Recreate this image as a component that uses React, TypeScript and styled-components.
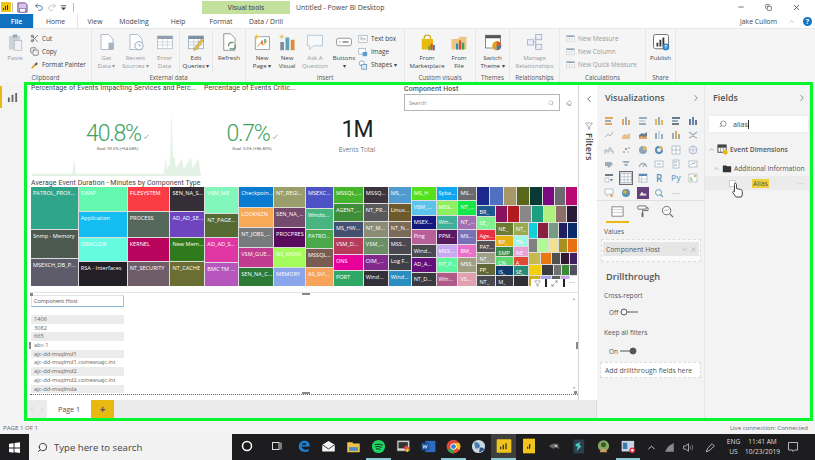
import React from 'react';
import styled, { createGlobalStyle } from 'styled-components';
import { ChevronDown, ChevronLeft, ChevronRight, ChevronUp, Eraser, Search, X, Filter, Maximize2, Minus, Copy, Scissors, Undo2, Redo2 } from 'lucide-react';

const Global = createGlobalStyle`
  html, body { margin: 0; padding: 0; width: 815px; height: 460px; overflow: hidden; background: #fff; }
  #root { width: 815px; height: 460px; }
  * { box-sizing: border-box; }
`;

const Page = styled.div`
  width: 815px; height: 460px; display: flex; flex-direction: column;
  font-family: "Open Sans", "Liberation Sans", sans-serif; color: #444; background: #fff;
`;

/* ---------- title bar ---------- */
const TitleBar = styled.div`display: flex; height: 14px; background: #fff;`;
const Qat = styled.div`width: 202px; display: flex; align-items: center; padding-left: 1px;`;
const QatItem = styled.span<{ $w: number }>`width: ${p => p.$w}px; display: flex; justify-content: center; align-items: center;`;
const QatSep = styled.span`width: 1px; height: 9px; background: #bbb;`;
const ToolsTab = styled.div`width: 88px; height: 13px; margin-top: 1px; background: #c3e09d; color: #556; font-size: 6.6px; font-weight: 600; display: flex; align-items: center; justify-content: center;`;
const DocTitle = styled.div`padding: 2px 0 0 6px; font-size: 6.9px; color: #444; line-height: 12px; white-space: nowrap;`;
const WinControls = styled.div`margin-left: auto; display: flex; padding-right: 5px; align-items: center; color: #333;`;
const WinBtn = styled.span`width: 27.5px; display: flex; justify-content: center;`;

/* ---------- tabs ---------- */
const TabRow = styled.div`display: flex; height: 14px; background: #fff; align-items: stretch;`;
const FileTab = styled.div`width: 33px; background: #0f71c0; color: #fff; font-size: 7px; font-weight: 600; display: flex; align-items: center; justify-content: center;`;
const Tab = styled.div<{ $w: number; $active?: boolean }>`
  width: ${p => p.$w}px; font-size: 6.8px; color: #444; display: flex; align-items: center; justify-content: center;
  background: #fff; ${p => p.$active ? 'border-left: 1px solid #e4e4e4; border-right: 1px solid #e4e4e4;' : ''}
`;
const Account = styled.div`margin-left: auto; display: flex; align-items: center; font-size: 6.8px; color: #444; padding-right: 3px;`;
const HelpDot = styled.span`width: 9px; height: 9px; border-radius: 50%; background: #1173c4; color: #fff; font-size: 7px; font-weight: 700; display: flex; align-items: center; justify-content: center; margin-left: 8px;`;
const Caret = styled.span`margin-left: 11px; color: #999; display: flex;`;

/* ---------- ribbon ---------- */
const Ribbon = styled.div`display: flex; height: 54px; background: #f5f5f5; border-top: 1px solid #e8e8e8;`;
const Group = styled.div<{ $w: number }>`
  width: ${p => p.$w}px; display: flex; flex-direction: column; border-right: 1px solid #e6e6e6; flex: none;
`;
const GroupBody = styled.div<{ $pad?: number }>`height: 44px; display: flex; padding-left: ${p => p.$pad ?? 0}px; padding-top: 2px;`;
const GroupLabel = styled.div`height: 9px; font-size: 6.2px; line-height: 9px; text-align: center; color: #555; white-space: nowrap;`;
const RBtn = styled.div<{ $w: number; $off?: boolean; $rule?: boolean }>`
  width: ${p => p.$w}px; flex: none; display: flex; flex-direction: column; align-items: center; font-size: 6.1px; line-height: 8px; text-align: center;
  color: ${p => p.$off ? '#9a9a9a' : '#444'}; white-space: nowrap; ${p => p.$rule ? 'border-left: 1px solid #e6e6e6;' : ''}
`;
const RIcon = styled.div`height: 22px; display: flex; align-items: center; justify-content: center; margin-bottom: 1px;`;
const SmallCol = styled.div<{ $off?: boolean }>`display: flex; flex-direction: column; padding-top: 1px; color: ${p => p.$off ? '#9a9a9a' : '#444'};`;
const SmallRow = styled.div`height: 13px; display: flex; align-items: center; gap: 3px; font-size: 6.3px; white-space: nowrap;`;

/* ---------- body ---------- */
const Body = styled.div`height: 339px; display: flex; background: #f3f3f3;`;
const Rail = styled.div`width: 24px; flex: none; padding-top: 4px; display: flex; justify-content: center;`;
const RailItem = styled.div`width: 24px; height: 22px; border-left: 2px solid #e8b90f; display: flex; align-items: center; justify-content: center; padding-right: 2px;`;
const Frame = styled.div`width: 789px; flex: none; border: 3px solid #06f52f; display: flex;`;
const Report = styled.div`width: 570px; flex: none; display: flex; flex-direction: column;`;
const CanvasRow = styled.div`height: 315px; display: flex; background: #fff;`;
const Canvas = styled.div`width: 551px; flex: none; padding: 0 0 0 4px; display: flex; flex-direction: column; position: relative;`;
const KpiRow = styled.div`height: 94px; display: grid; grid-template-columns: 173px 96px 104px 173px;`;
const Card = styled.div<{ $shift?: number }>`position: relative; display: flex; flex-direction: column; min-width: 0; padding-left: ${p => p.$shift ?? 0}px;`;
const CardTitle = styled.div`font-family: Roboto, sans-serif; font-size: 6.95px; letter-spacing: .1px; line-height: 9px; height: 9px; margin-top: -1px; color: #444; white-space: nowrap;`;
const CardBody = styled.div`flex: 1; display: flex; flex-direction: column; align-items: center; justify-content: center; position: relative;`;
const Spark = styled.svg`position: absolute; left: 1px; top: 15px; width: 169px; height: 68px;`;
const KpiValue = styled.div`font-family: Roboto, sans-serif; font-weight: 300; color: #3fa35f; font-size: 23px; letter-spacing: -1.2px; line-height: 25px; display: flex; align-items: flex-end; padding-top: 1px; position: relative;`;
const Tick = styled.span`margin: 0 0 6px 2px; display: flex;`;
const KpiGoal = styled.div`font-family: Roboto, sans-serif; font-size: 4.2px; color: #666; line-height: 6px; margin-top: 0; position: relative;`;
const BigNum = styled.div`font-family: Roboto, sans-serif; font-size: 23px; color: #222; line-height: 26px; letter-spacing: -1px;`;
const BigLabel = styled.div`font-family: Roboto, sans-serif; font-weight: 300; font-size: 6.8px; color: #555; line-height: 11px; margin-top: 2px;`;
const SlicerTitle = styled.div`font-family: Roboto, sans-serif; font-size: 7px; font-weight: 500; line-height: 9px; color: #555; letter-spacing: .1px;`;
const SlicerRow = styled.div`display: flex; align-items: center;`;
const SlicerBox = styled.div`width: 156px; height: 17px; border: 1px solid #b5b5b5; background: #fff; display: flex; align-items: center; justify-content: space-between; padding: 0 5px 0 4px; font-size: 5.5px; color: #888;`;
const Clear = styled.span`margin-left: 6px; color: #777; display: flex;`;
const TreeTitle = styled.div`font-family: Roboto, sans-serif; font-size: 6.95px; letter-spacing: .1px; height: 8px; line-height: 8px; color: #444; white-space: nowrap;`;
const TreeWrap = styled.div`position: relative; height: 99px; width: 546px;`;
const TreeBox = styled.div<{ $d: 'row' | 'column'; $w: number }>`
  flex: ${p => p.$w} 1 0; display: flex; flex-direction: ${p => p.$d}; gap: 1px; min-width: 0; min-height: 0; background: #ddd;
`;
const TreeRoot = styled(TreeBox)`height: 100%;`;
const Cell = styled.div<{ $bg: string; $w: number }>`
  flex: ${p => p.$w} 1 0; background: ${p => p.$bg}; color: #fff; font-size: 5.6px; line-height: 8px; padding: 2px 0 0 2px; overflow: hidden; white-space: nowrap; min-width: 0; min-height: 0;
`;
const VisualHeader = styled.div`position: absolute; right: 0; bottom: -1px; width: 46px; height: 8px; background: #fff; display: flex; align-items: center; justify-content: space-between; padding: 0 1px 0 3px; color: #777;`;
const HeadBar = styled.span`width: 2px; height: 8px; background: #222;`;
const HeadDots = styled.span`font-size: 7px; line-height: 4px; letter-spacing: .5px; color: #555;`;
const TableVisual = styled.div`margin-top: 6px; height: 103px; margin-left: -1px; width: 548px; position: relative; border-top: 1px solid #e4e4e4; border-bottom: 1px dotted #666; padding: 2px 0 0 1px;`;
const Handle = styled.span<{ $x: number; $y: number; $h?: number; $w?: number }>`position: absolute; left: ${p => p.$x}px; top: ${p => p.$y}px; width: ${p => p.$w ?? 2}px; height: ${p => p.$h ?? 2}px; background: #888;`;
const ColHead = styled.div`width: 93px; height: 12px; border: 1px solid #e2e2e2; border-bottom: 1px solid #88b6d6; border-right-color: #9fc4dc; font-size: 5.5px; line-height: 10px; padding-left: 2px; color: #555;`;
const Rows = styled.div`margin-top: 8px; width: 93px;`;
const TblRow = styled.div<{ $odd: boolean }>`height: 8.7px; line-height: 8.7px; font-size: 5.7px; padding-left: 3px; color: #666; background: ${p => p.$odd ? '#ececec' : '#fff'}; white-space: nowrap;`;
const ScrollTrack = styled.div`position: absolute; right: 2px; top: 3px; bottom: 4px; width: 5px; display: flex; flex-direction: column; align-items: center; justify-content: space-between; color: #999; font-size: 4px;`;

const FilterPane = styled.div`width: 19px; flex: none; border-left: 1px solid #d5d5d5; display: flex; flex-direction: column; align-items: center; padding: 9px 0 0 2px; color: #555;`;
const FilterIcon = styled.span`margin-top: 18px; display: flex; color: #888;`;
const FilterLabel = styled.div`writing-mode: vertical-rl; font-size: 9.2px; font-weight: 600; color: #444; margin-top: 3px; line-height: 11px;`;
const PageTabs = styled.div`height: 18px; background: #ebebeb; display: flex; align-items: stretch; border-right: 1px solid #ddd;`;
const PageNav = styled.div`width: 20px; display: flex; align-items: center; justify-content: center; gap: 4px; color: #bbb;`;
const PageTab = styled.div`width: 44px; background: #fff; font-size: 7.2px; color: #555; display: flex; align-items: center; justify-content: center;`;
const AddTab = styled.div`width: 23px; background: #e8b90f; color: #555; font-weight: 700; font-size: 10px; display: flex; align-items: center; justify-content: center;`;

/* ---------- right panes ---------- */
const Pane = styled.div<{ $w: number }>`width: ${p => p.$w}px; flex: none; background: #f3f3f3; border-right: 1px solid #e6e6e6; display: flex; flex-direction: column; position: relative;`;
const PaneHead = styled.div<{ $right: number }>`height: 24px; display: flex; align-items: center; justify-content: space-between; padding: 1px ${p => p.$right}px 0 8px; font-size: 9px; font-weight: 600; color: #555; flex: none;`;
const VizGrid = styled.div`display: grid; grid-template-columns: repeat(6, 14.5px); grid-auto-rows: 14.3px; column-gap: 2.2px; padding: 5px 0 0 5px; height: 92px; border-bottom: 1px solid #e0e0e0; flex: none;`;
const VizCell = styled.div<{ $sel?: boolean }>`display: flex; align-items: center; justify-content: center; opacity: .85; ${p => p.$sel ? 'outline: 1px solid #555; outline-offset: -1px;' : ''}`;
const VizTabs = styled.div`display: flex; height: 22px; padding-left: 9px; gap: 1px; flex: none;`;
const VizTab = styled.div<{ $on?: boolean }>`width: 23px; display: flex; align-items: center; justify-content: center; margin-right: 1px; border-bottom: 2px solid ${p => p.$on ? '#e8b90f' : 'transparent'};`;
const Caption = styled.div<{ $top: number }>`font-size: 6.6px; line-height: 9px; color: #555; padding-left: 7px; margin-top: ${p => p.$top}px;`;
const Well = styled.div`margin: 3px 3px 0 4px; height: 23px; border: 1px dashed #ddd; background: #fafafa; padding: 2px 1px;`;
const Pill = styled.div`height: 14px; background: #e6e6e6; display: flex; align-items: center; justify-content: space-between; font-size: 6.8px; padding: 0 2px 0 3px; color: #555;`;
const PillIcons = styled.span`display: flex; gap: 2px; color: #999;`;
const Section = styled.div`font-size: 9.2px; font-weight: 600; color: #555; padding-left: 9px; margin-top: 8px; line-height: 14px;`;
const ToggleRow = styled.div<{ $top: number }>`display: flex; align-items: center; height: 10px; padding-left: 12px; font-size: 6.4px; color: #555; margin-top: ${p => p.$top}px; gap: 2px;`;
const Drop = styled.div`margin: 6px 3px 0 3px; height: 16px; border: 1px dashed #ddd; background: #fff; font-size: 6.8px; display: flex; align-items: center; padding-left: 4px; color: #555; white-space: nowrap;`;
const FieldSearch = styled.div`margin: 6px 0 0 3px; height: 18px; background: #fff; border: 1px solid #eee; display: flex; align-items: center; gap: 6px; padding-left: 10px; font-size: 7.2px; color: #444; flex: none;`;
const TextCaret = styled.span`width: 1px; height: 9px; background: #333; margin-left: -6px;`;
const TreeLine = styled.div<{ $pad: number; $top: number; $bold?: boolean }>`display: flex; align-items: center; gap: 2px; height: 12px; padding-left: ${p => p.$pad}px; margin-top: ${p => p.$top}px; font-size: 6.7px; font-weight: ${p => p.$bold ? 600 : 400}; color: #555; white-space: nowrap;`;
const AliasRow = styled.div`height: 14px; margin-top: 2px; background: #ebebeb; display: flex; align-items: center; position: relative; padding-left: 24px;`;
const Check = styled.span`width: 7px; height: 7px; background: #fff; border: 1px solid #ccc;`;
const Alias = styled.span`margin-left: 16px; background: #f0cf3a; font-size: 6.8px; padding: 0 1px; line-height: 9px; color: #555;`;
const RowDots = styled.span`margin-left: auto; padding-right: 5px; font-size: 6px; color: #888; letter-spacing: .4px;`;
const Cursor = styled.svg`position: absolute; left: 26px; top: 6px; width: 13px; height: 16px;`;

/* ---------- status + taskbar ---------- */
const Status = styled.div`height: 13px; background: #f3f3f3; display: flex; justify-content: space-between; align-items: center; padding: 0 7px 0 3px; font-size: 6.1px; color: #666;`;
const Taskbar = styled.div`height: 26px; background: #1d1d1f; display: flex; align-items: stretch; color: #eee;`;
const StartBtn = styled.div`width: 29px; display: flex; align-items: center; justify-content: center;`;
const SearchBar = styled.div`width: 203px; background: #f2f2f2; display: flex; align-items: center; gap: 6px; padding-left: 8px; font-size: 9.6px; color: #444;`;
const TaskIcon = styled.div<{ $w: number; $on?: boolean; $hi?: boolean }>`width: ${p => p.$w}px; display: flex; align-items: center; justify-content: center; border-bottom: 2px solid ${p => p.$on ? '#8cc9d8' : 'transparent'}; background: ${p => p.$hi ? '#3e3e3e' : 'transparent'};`;
const Tray = styled.div`margin-left: auto; display: flex; align-items: center; padding-right: 10px;`;
const TrayItem = styled.div<{ $w: number }>`width: ${p => p.$w}px; display: flex; flex-direction: column; align-items: center; justify-content: center; font-size: 6.6px; line-height: 10px; color: #ddd; white-space: nowrap;`;

type Node = { w: number; c?: string; t?: string; d?: 'row' | 'column'; k?: Node[] };
const col = (w: number, k: [string, string, number][]): Node => ({ w, d: 'column', k: k.map(([c, t, h]) => ({ w: h, c, t })) });
const row = (w: number, k: [string, number][]): Node => ({ w, d: 'row', k: k.map(([c, n]) => ({ w: n, c })) });

const treemap: Node = {
  w: 1, d: 'row', k: [
    col(47, [['#2fa58a', 'PATROL_PROX...', 43], ['#4d5a50', 'Snmp - Memory', 28], ['#5e5c6b', 'MSEXCH_DB_P...', 27]]),
    col(48, [['#62f9ae', 'SWAP', 25], ['#13bdf2', 'Application', 25], ['#65fbe1', 'ORACLDB', 24], ['#231f26', 'RSA - Interfaces', 24]]),
    col(42, [['#fb3c45', 'FILESYSTEM', 25], ['#56675c', 'PROCESS', 25], ['#b8045d', 'KERNEL', 24], ['#6e5c69', 'NT_SECURITY', 24]]),
    col(34, [['#342f36', 'SEN_NA_S...', 25], ['#6f45bf', 'AD_AD_SE...', 25], ['#2e7a1c', 'New Mem...', 24], ['#6a6e32', 'NT_CACHE', 24]]),
    col(33, [['#82f7bb', 'VSM_ME', 26], ['#566a33', 'NT_PAGE...', 24], ['#e036a4', 'AD_AD_S...', 24], ['#b656bd', 'BMC TM ...', 23]]),
    col(34, [['#0b7bd0', 'Checkpoin...', 20], ['#f7aa55', 'LOOKNZN', 19], ['#777a7b', 'NT_JOBS_...', 19], ['#c13b8f', 'VSM_GUE...', 19], ['#2c7a36', 'SEN_NA_C...', 18]]),
    col(31, [['#999e6a', 'NT_REGI...', 20], ['#744a6d', 'SEN_NA_...', 19], ['#5a0c5c', 'PROCPRES', 19], ['#a4fb5c', 'NS_KNXN', 19], ['#8aa5ec', 'MEMORY', 18]]),
    col(27, [['#4d52c4', 'MSEXC...', 21], ['#48b580', 'Windo...', 21], ['#4aa84a', 'PATRO...', 18], ['#795c52', 'MSSQL...', 18], ['#f8a35c', 'AS_SVI...', 18]]),
    col(29, [['#45b52d', 'MSSQL_...', 17], ['#3e8e3a', 'AGENT_...', 17], ['#43506f', 'MS_HW...', 16], ['#b83a5a', 'VSM_D...', 16], ['#e8009a', 'ONS', 16], ['#2fa866', 'PORT', 15]]),
    col(24, [['#3c3540', 'MSSQ...', 17], ['#5a5a5c', 'NT_PR...', 17], ['#8c8c76', 'NT_M...', 16], ['#6a8f64', 'VSM_...', 16], ['#822a8c', 'OIM_...', 16], ['#34303a', 'Wind...', 15]]),
    col(22, [['#4f9bd0', 'MS_...', 17], ['#6d5a2b', 'Linux...', 17], ['#7a6a58', 'NT_N...', 16], ['#4a484e', 'MSS...', 16], ['#3d4048', 'Log F...', 16], ['#2a8fc0', 'Wind...', 15]]),
    col(24, [['#55e01c', 'MS_H', 14], ['#5cc4ea', 'VSM_...', 14], ['#12187e', 'MSEX...', 14], ['#b8609a', 'Ping', 14], ['#4a4850', 'Wind...', 13], ['#65107a', 'AD_A...', 14], ['#3a3a40', 'NT_D...', 14]]),
    col(21, [['#0fa8f0', 'Syba...', 14], ['#8cf060', 'MSS...', 14], ['#40b09a', 'Win...', 14], ['#5a1a60', 'PPM...', 14], ['#c8a8f0', 'MSS...', 13], ['#60f5a0', 'NT_P...', 14], ['#b05a88', 'Win...', 14]]),
    col(18, [['#6a6a6e', 'MS...', 14], ['#13e84a', 'NT_...', 14], ['#a070b0', 'NT_...', 14], ['#7a70b8', 'MS...', 14], ['#e870c8', 'BM_', 13], ['#a0a080', 'MSS...', 14], ['#e0a0b0', 'VS...', 14]]),
    {
      w: 100, d: 'column', k: [
        row(18, [['#1a2a8c', 12], ['#5070c0', 13], ['#a89868', 13], ['#586818', 12], ['#0a3a38', 12], ['#7a0a80', 11], ['#6a6a70', 10], ['#b80a70', 11]]),
        {
          w: 80, d: 'row', k: [
            col(18, [['#1a5a90', 'BR_', 10], ['#80f090', 'SE_', 12], ['#e83040', 'Age...', 10], ['#555055', 'PAT...', 12], ['#a0a088', 'NT_', 10], ['#606838', 'PP_', 11], ['#4a484e', 'NT_', 10]]),
            {
              w: 81, d: 'column', k: [
                row(16, [['#8a1060', 11], ['#b01a20', 11], ['#888888', 11], ['#1aa080', 11], ['#b0f080', 11], ['#8a7068', 10], ['#2a1a3a', 10]]),
                {
                  w: 63, d: 'row', k: [
                    col(16, [['#6a7a30', 'NE_', 13], ['#e8b010', 'BP_', 10], ['#3a8a4a', 'SMP', 9], ['#60d870', 'CN_', 9], ['#103a6a', 'IS_', 9], ['#3a3a40', 'M_', 10]]),
                    col(14, [['#9aaa50', 'NT_', 13], ['#a0f8e8', 'TN', 10], ['#e8a0d8', 'NE', 9], ['#e04838', 'A_', 9], ['#2a8a78', 'SE_', 9], ['#303034', '', 10]]),
                    {
                      w: 47, d: 'column', k: [
                        row(13, [['#10d0d8', 8], ['#8a2040', 10], ['#7a9a88', 8], ['#202060', 8], ['#0a2a6a', 9]]),
                        row(12, [['#808080', 8], ['#b0f898', 10], ['#f0e090', 9], ['#a89020', 8], ['#e87010', 9]]),
                        row(9, [['#c8b850', 12], ['#e87810', 10], ['#505050', 8], ['#301830', 8], ['#402060', 7]]),
                        row(9, [['#f0d010', 12], ['#3a3a40', 10], ['#707070', 6], ['#3a8a3a', 6], ['#505060', 6]]),
                        row(9, [['#d0b020', 12], ['#a8a8e8', 11], ['#606060', 8], ['#c8a8e8', 8], ['#fff', 6]]),
                      ],
                    },
                  ],
                },
              ],
            },
          ],
        },
      ],
    },
  ],
};

const Tree = ({ n }: { n: Node }) => n.k ? (
  <TreeBox $d={n.d!} $w={n.w}>{n.k.map((c, i) => <Tree key={i} n={c} />)}</TreeBox>
) : <Cell $bg={n.c!} $w={n.w}>{n.t}</Cell>;

const Ic = ({ s = 18, h, v = 24, children }: { s?: number; h?: number; v?: number; children: React.ReactNode }) => (
  <svg width={s} height={h ?? s} viewBox={`0 0 ${v} ${v}`} fill="none">{children}</svg>
);

const DocBase = () => <path d="M4 2h10l6 6v14H4z" fill="#fff" stroke="#a9b6c2" strokeWidth="1.2" />;
const icons = {
  paste: <><rect x="4" y="4" width="15" height="18" fill="#cbd3da" /><rect x="9" y="2" width="6" height="4" fill="#9aa7b2" /><rect x="11" y="10" width="10" height="13" fill="#eef2f5" stroke="#aab" strokeWidth=".8" /></>,
  getData: <><DocBase /><rect x="14" y="13" width="7" height="9" fill="#a5b4c2" /></>,
  recent: <><DocBase /><circle cx="16" cy="17" r="5.5" fill="#fff" stroke="#8ea3b5" strokeWidth="1.2" /><path d="M16 14v3h3" stroke="#8ea3b5" /></>,
  enter: <><rect x="2" y="4" width="20" height="17" fill="#fff" stroke="#a9b6c2" /><rect x="2" y="4" width="20" height="4" fill="#8fa0b0" /><path d="M2 12h20M2 16h20M9 8v13M15 8v13" stroke="#b6c2cc" strokeWidth=".8" /></>,
  edit: <><rect x="2" y="4" width="20" height="17" fill="#fff" stroke="#8ea3b5" /><rect x="2" y="4" width="20" height="4" fill="#7d90a2" /><path d="M2 12h20M2 16h20M9 8v13M15 8v13" stroke="#aab6c0" strokeWidth=".8" /><path d="M10 20l9-12 3 2-9 12-4 1z" fill="#e7c24a" stroke="#8a7a30" strokeWidth=".6" /></>,
  refresh: <><path d="M5 1h9l6 6v16H5z" fill="#fff" stroke="#777" strokeWidth="1" /><circle cx="16" cy="17" r="4.5" stroke="#5a8a6a" strokeWidth="1.6" strokeDasharray="10 3" /></>,
  newPage: <><rect x="3" y="5" width="19" height="17" fill="#fff" stroke="#7f8c96" /><path d="M6 18l4-5 4 3 5-6" stroke="#d8a018" strokeWidth="1.3" /><rect x="11" y="10" width="2" height="5" fill="#e0584a" /><rect x="15" y="8" width="2" height="5" fill="#3fa35f" /><path d="M5 1l1 3 3 1-3 1-1 3-1-3-3-1 3-1z" fill="#efc53a" /></>,
  newVisual: <><rect x="3" y="12" width="5" height="11" fill="#7c8fa1" /><rect x="10" y="6" width="5" height="17" fill="#5fa3b8" /><rect x="17" y="9" width="5" height="14" fill="#e08a3c" /><path d="M5 1l1 3 3 1-3 1-1 3-1-3-3-1 3-1z" fill="#efc53a" /></>,
  ask: <path d="M2 3h20v14H10l-5 5v-5H2z" fill="#f6f9fb" stroke="#a9c4d6" strokeWidth="1.1" />,
  buttons: <><rect x="2" y="7" width="20" height="10" rx="3" fill="#fff" stroke="#777" /><path d="M6 12h1M10 12h8" stroke="#444" strokeWidth="1.3" /></>,
  market: <><path d="M5 8h15v14H5z" fill="#e8b90f" /><path d="M8 8c0-7 9-7 9 0" stroke="#c89a08" strokeWidth="1.4" /><rect x="14" y="17" width="2.5" height="6" fill="#3fa35f" /><rect x="17" y="14" width="2.5" height="9" fill="#d8503a" /><rect x="20" y="16" width="2.5" height="7" fill="#3a78c0" /></>,
  fromFile: <><path d="M2 8h9l2-3h9v17H2z" fill="#edc680" /><rect x="8" y="14" width="3" height="8" fill="#3a88c0" /><rect x="12" y="10" width="3" height="12" fill="#d8503a" /><rect x="16" y="13" width="3" height="9" fill="#3fa35f" /></>,
  theme: <><rect x="2" y="3" width="20" height="17" fill="#fff" stroke="#666" /><rect x="2" y="3" width="20" height="4" fill="#555" /><path d="M17 11a6 6 0 100 12 6 6 0 000-12z" fill="#e0a020" /><path d="M17 17V11a6 6 0 016 6z" fill="#d8503a" /><path d="M17 17h6a6 6 0 01-6 6z" fill="#3a78c0" /></>,
  manage: <><rect x="13" y="2" width="8" height="7" fill="#eef" stroke="#9ab" /><rect x="2" y="9" width="8" height="7" fill="#eef" stroke="#9ab" /><rect x="13" y="15" width="8" height="7" fill="#eef" stroke="#9ab" /><path d="M10 12h3M13 6v14" stroke="#9ab" /></>,
  publish: <><rect x="2" y="2" width="20" height="19" rx="3" fill="#fff" stroke="#666" strokeWidth="1.2" /><rect x="6" y="13" width="2.4" height="5" fill="#333" /><rect x="10" y="9" width="2.4" height="9" fill="#333" /><rect x="14" y="6" width="2.4" height="12" fill="#333" /><circle cx="18.5" cy="18.5" r="4.5" fill="#2e80c8" /><path d="M18.5 21v-5M16.5 18l2-2 2 2" stroke="#fff" strokeWidth="1" /></>,
  text: <><rect x="2" y="4" width="20" height="16" fill="#fff" stroke="#6a7a88" /><path d="M5 8h6M5 11h14M5 14h14" stroke="#6a7a88" /></>,
  image: <><rect x="2" y="3" width="16" height="14" fill="#fff" stroke="#6a8aa5" strokeWidth="1.2" /><rect x="11" y="12" width="11" height="10" fill="#3a88c0" opacity=".8" /></>,
  shapes: <><circle cx="9" cy="8" r="6" fill="#fff" stroke="#3a78b0" strokeWidth="1.4" /><rect x="9" y="11" width="12" height="11" fill="#d9e8f4" stroke="#3a78b0" strokeWidth="1.4" /></>,
};

const RB = ({ w, icon, lines, off, rule }: { w: number; icon: React.ReactNode; lines: string[]; off?: boolean; rule?: boolean }) => (
  <RBtn $w={w} $off={off} $rule={rule}>
    <RIcon><Ic>{icon}</Ic></RIcon>
    {lines.map(l => <div key={l}>{l}</div>)}
  </RBtn>
);

const Bars = ({ f }: { f: string[] }) => (
  <Ic s={10} v={10}>
    <rect x="1" y="1" width="8" height="2" fill={f[0]} /><rect x="1" y="4" width="6" height="2" fill={f[1]} /><rect x="1" y="7" width="7" height="2" fill={f[0]} />
  </Ic>
);
const Cols = ({ f }: { f: string[] }) => (
  <Ic s={10} v={10}>
    <rect x="1" y="3" width="2" height="6" fill={f[0]} /><rect x="4" y="1" width="2" height="8" fill={f[1]} /><rect x="7" y="4" width="2" height="5" fill={f[0]} />
  </Ic>
);
const RGlyph = styled.span`font-size: 10px; color: #4f7fb0; font-weight: 600; line-height: 1;`;
const PyGlyph = styled.span`font-size: 8.5px; color: #6a9ac8; font-weight: 600; line-height: 1;`;
const MoreGlyph = styled.span`font-size: 8px; color: #666; line-height: 1; letter-spacing: .5px;`;
const G = '#8da0b0', O = '#e09a4a', B = '#3a78b0', D = '#55677a', Y = '#e0b040';
const viz: React.ReactNode[] = [
  <Bars f={[O, G]} />, <Cols f={[O, G]} />, <Bars f={[G, '#c8d2da']} />, <Cols f={[Y, G]} />, <Bars f={[D, G]} />, <Cols f={[D, B]} />,
  <Ic s={10} v={10}><path d="M1 7l3-3 2 2 3-4" stroke={G} strokeWidth=".9" /></Ic>,
  <Ic s={10} v={10}><path d="M1 9V6l3-2 2 1 3-2v6z" fill={O} opacity=".7" /></Ic>,
  <Ic s={10} v={10}><path d="M1 9V5l3-2 2 1 3-2v7z" fill={D} /><path d="M1 9V7l3-1 2 1 3-1v3z" fill={O} /></Ic>,
  <Cols f={[G, '#c8d2da']} />, <Cols f={[G, O]} />,
  <Ic s={10} v={10}><path d="M1 2l4 3 4-3M1 8l4-2 4 2" stroke={G} strokeWidth="1.1" /></Ic>,
  <Ic s={10} v={10}><path d="M1 9V5h2v2h2V3h2v3h2v3" stroke={G} strokeWidth=".9" /></Ic>,
  <Ic s={10} v={10}><circle cx="3" cy="7" r="1" fill={G} /><circle cx="5" cy="4" r="1" fill={B} /><circle cx="8" cy="3" r=".9" fill={O} /><circle cx="7" cy="7" r=".8" fill={G} /></Ic>,
  <Ic s={10} v={10}><circle cx="5" cy="5" r="4" fill="#7f95ab" /><path d="M5 5V1a4 4 0 014 4z" fill={Y} /></Ic>,
  <Ic s={10} v={10}><circle cx="5" cy="5" r="3" stroke={B} strokeWidth="2" /><path d="M5 2a3 3 0 013 3" stroke={Y} strokeWidth="2" /></Ic>,
  <Ic s={10} v={10}><rect x="1" y="1" width="8" height="8" fill="#fff" stroke={G} strokeWidth=".7" /><path d="M5 1v8M1 5h8" stroke={G} strokeWidth=".7" /></Ic>,
  <Ic s={10} v={10}><circle cx="5" cy="5" r="4" fill="#eef" stroke={G} strokeWidth=".7" /><path d="M1 5h8M5 1v8" stroke={G} strokeWidth=".5" /></Ic>,
  <Ic s={10} v={10}><path d="M1 3h6l2 2-2 2-2 2-2-2H1z" fill={G} /></Ic>,
  <Ic s={10} v={10}><path d="M1 2h8L7 4H3zM3 5h4L6 7H4z" fill={G} /></Ic>,
  <Ic s={10} v={10}><path d="M1.5 8a3.5 3.5 0 017 0" stroke={G} strokeWidth="1.4" /><path d="M5 8l2-3" stroke={D} strokeWidth=".8" /></Ic>,
  <Ic s={10} v={10}><rect x="1" y="2" width="8" height="6" fill="#fff" stroke={G} strokeWidth=".7" /><path d="M3 5h4" stroke={G} /></Ic>,
  <Ic s={10} v={10}><rect x="2" y="1" width="6" height="8" fill="#fff" stroke={G} strokeWidth=".7" /><path d="M3 3h3M3 6h3" stroke={D} strokeWidth=".7" /></Ic>,
  <Ic s={10} v={10}><rect x="1" y="2" width="8" height="6" fill="#fff" stroke={G} strokeWidth=".7" /><path d="M3 6l2-2 1 1 1-2" stroke={B} strokeWidth=".6" /></Ic>,
  <Ic s={10} v={10}><rect x="1" y="1" width="8" height="2" fill={D} /><path d="M1 5h4v4H1z" fill="#fff" stroke={G} strokeWidth=".6" /><path d="M6 6h3L7.5 8.5z" fill={D} /></Ic>,
  <Ic s={12} v={10}><rect x=".5" y="1" width="9" height="8" fill="#fff" stroke={G} strokeWidth=".7" /><path d="M.5 4h9M.5 6.5h9M3.5 1v8M6.5 1v8" stroke={G} strokeWidth=".5" /></Ic>,
  <Ic s={10} v={10}><rect x="1" y="1" width="8" height="8" fill="#fff" stroke={G} strokeWidth=".7" /><rect x="1" y="1" width="8" height="2" fill={B} /><path d="M3.5 3v6M1 6h8" stroke={G} strokeWidth=".5" /></Ic>,
  <RGlyph>R</RGlyph>,
  <PyGlyph>Py</PyGlyph>,
  <Ic s={10} v={10}><rect x="1" y="1" width="8" height="8" fill="#fff" stroke={G} strokeWidth=".6" /><circle cx="7" cy="3" r="1.2" fill={Y} /><path d="M2 7h3M2 5h2" stroke="#7aa05a" /></Ic>,
  <Ic s={10} v={10}><path d="M1 1h8v5H5L3 8V6H1z" fill="#fff" stroke={G} strokeWidth=".7" /><circle cx="7.5" cy="7.5" r="1.5" fill={O} /></Ic>,
  <Ic s={10} v={10}><circle cx="5" cy="5" r="4" fill="#3a88a8" /><path d="M3 2l3 1-1 3-3-1z" fill="#d8a030" /><path d="M6 6l2 1-2 2z" fill="#3fa35f" /></Ic>,
  <Ic s={12} v={10}><rect width="10" height="10" fill="#4d2268" /><path d="M2 7l2-3 2 2 1-1 1 2z" fill="#eee" /></Ic>,
  <Ic s={10} v={10}><circle cx="4.5" cy="4.5" r="3" stroke="#4a9ab8" strokeWidth="1" /><path d="M6.5 6.5L9 9" stroke="#4a9ab8" strokeWidth="1.1" /></Ic>,
  <MoreGlyph>···</MoreGlyph>,
];

const hosts = ['1406', '3082', '665', 'abc-1', 'ajc-dd-msqlmd1', 'ajc-dd-msqlmd1.coinewsajc.int', 'ajc-dd-msqlmd2', 'ajc-dd-msqlmd2.coinewsajc.int', 'ajc-dd-msqlmda'];

/* thin spikes across the lower KPI chart: a peak near x=139, one near x=41 and a dense mass on the right */
const sparkPath = (() => {
  const pts: string[] = ['M0 68'];
  for (let x = 0; x <= 169; x += 1.5) {
    let h = 1.5 + ((x * 7) % 3);
    if (Math.abs(x - 42) < 1) h = 18;
    if (x > 132) h = 6 + ((x * 11) % 14);
    if (Math.abs(x - 139.5) < 1) h = 66;
    pts.push(`L${x} ${(68 - h).toFixed(1)}`);
  }
  return pts.join('') + 'L169 68Z';
})();

const TrayIcon = ({ children }: { children: React.ReactNode }) => <Ic s={13} v={24}>{children}</Ic>;
const Toggle = ({ on }: { on?: boolean }) => (
  <svg width="18" height="8" viewBox="0 0 18 8">
    <path d={on ? 'M0 4h12' : 'M7 4h11'} stroke="#555" strokeWidth="1" />
    <circle cx={on ? 13 : 4} cy="4" r="3" fill={on ? '#555' : 'none'} stroke="#555" strokeWidth="1" />
  </svg>
);
const Check2 = () => <Tick><Ic s={6} v={8}><path d="M1 4l2 2 4-5" stroke="#6aa07a" strokeWidth="1" /></Ic></Tick>;

export default function App() {
  return (
    <Page>
      <Global />
      <TitleBar>
        <Qat>
          <Ic s={10} v={10}><rect width="10" height="10" fill="#f0c41a" /><path d="M2 8V6h1v2zM4 8V4h1v4zM6 8V3h1v5z" fill="#333" /></Ic>
          <QatItem $w={2}><QatSep /></QatItem>
          <QatItem $w={19}><Ic s={11} v={12}><path d="M1 1h8l2 2v8H1z" fill="#d7c5e6" stroke="#6d3f90" /><rect x="3" y="7" width="6" height="4" fill="#fff" stroke="#6d3f90" strokeWidth=".6" /></Ic></QatItem>
          <QatItem $w={13}><Undo2 size={10} color="#3e6b9c" /></QatItem>
          <QatItem $w={13}><Redo2 size={10} color="#b6c2cc" /></QatItem>
          <QatItem $w={11}><Ic s={7} v={8}><path d="M1 2h6" stroke="#444" /><path d="M1 4h6L4 7z" fill="#444" /></Ic></QatItem>
          <QatItem $w={8}><QatSep /></QatItem>
        </Qat>
        <ToolsTab>Visual tools</ToolsTab>
        <DocTitle>Untitled - Power BI Desktop</DocTitle>
        <WinControls>
          <WinBtn><Minus size={8} /></WinBtn>
          <WinBtn><Copy size={7} /></WinBtn>
          <WinBtn><X size={9} /></WinBtn>
        </WinControls>
      </TitleBar>
      <TabRow>
        <FileTab>File</FileTab>
        <Tab $w={45} $active>Home</Tab>
        <Tab $w={34}>View</Tab>
        <Tab $w={44}>Modeling</Tab>
        <Tab $w={44}>Help</Tab>
        <Tab $w={42}>Format</Tab>
        <Tab $w={48}>Data / Drill</Tab>
        <Account>Jake Cullom<Caret><ChevronUp size={7} /></Caret><HelpDot>?</HelpDot></Account>
      </TabRow>
      <Ribbon>
        <Group $w={92}>
          <GroupBody>
            <RB w={30} off icon={icons.paste} lines={['Paste']} />
            <SmallCol>
              <SmallRow><Scissors size={9} color="#555" />Cut</SmallRow>
              <SmallRow><Copy size={9} color="#666" />Copy</SmallRow>
              <SmallRow><Ic s={9}><path d="M3 20l9-9 3 3-9 9z" fill="#d8a018" /><path d="M12 11l5-5 4 4-5 5z" fill="#555" /></Ic>Format Painter</SmallRow>
            </SmallCol>
          </GroupBody>
          <GroupLabel>Clipboard</GroupLabel>
        </Group>
        <Group $w={154}>
          <GroupBody>
            <RB w={29} off icon={icons.getData} lines={['Get', 'Data ▾']} />
            <RB w={29} off icon={icons.recent} lines={['Recent', 'Sources ▾']} />
            <RB w={29} off icon={icons.enter} lines={['Enter', 'Data']} />
            <RB w={33} rule icon={icons.edit} lines={['Edit', 'Queries ▾']} />
            <RB w={33} rule icon={icons.refresh} lines={['Refresh']} />
          </GroupBody>
          <GroupLabel>External data</GroupLabel>
        </Group>
        <Group $w={159}>
          <GroupBody $pad={4}>
            <RB w={24} icon={icons.newPage} lines={['New', 'Page ▾']} />
            <RB w={26} icon={icons.newVisual} lines={['New', 'Visual']} />
            <RB w={30} off icon={icons.ask} lines={['Ask A', 'Question']} />
            <RB w={28} icon={icons.buttons} lines={['Buttons', '▾']} />
            <SmallCol>
              <SmallRow><Ic s={10}>{icons.text}</Ic>Text box</SmallRow>
              <SmallRow><Ic s={10}>{icons.image}</Ic>Image</SmallRow>
              <SmallRow><Ic s={10}>{icons.shapes}</Ic>Shapes ▾</SmallRow>
            </SmallCol>
          </GroupBody>
          <GroupLabel>Insert</GroupLabel>
        </Group>
        <Group $w={71}>
          <GroupBody $pad={2}>
            <RB w={40} icon={icons.market} lines={['From', 'Marketplace']} />
            <RB w={24} icon={icons.fromFile} lines={['From', 'File']} />
          </GroupBody>
          <GroupLabel>Custom visuals</GroupLabel>
        </Group>
        <Group $w={34}>
          <GroupBody><RB w={33} icon={icons.theme} lines={['Switch', 'Theme ▾']} /></GroupBody>
          <GroupLabel>Themes</GroupLabel>
        </Group>
        <Group $w={50}>
          <GroupBody><RB w={49} off icon={icons.manage} lines={['Manage', 'Relationships']} /></GroupBody>
          <GroupLabel>Relationships</GroupLabel>
        </Group>
        <Group $w={86}>
          <GroupBody $pad={6}>
            <SmallCol $off>
              <SmallRow><Ic s={9}>{icons.enter}</Ic>New Measure</SmallRow>
              <SmallRow><Ic s={9}>{icons.enter}</Ic>New Column</SmallRow>
              <SmallRow><Ic s={9}>{icons.enter}</Ic>New Quick Measure</SmallRow>
            </SmallCol>
          </GroupBody>
          <GroupLabel>Calculations</GroupLabel>
        </Group>
        <Group $w={30}>
          <GroupBody><RB w={29} icon={icons.publish} lines={['Publish']} /></GroupBody>
          <GroupLabel>Share</GroupLabel>
        </Group>
      </Ribbon>
      <Body>
        <Rail>
          <RailItem><Ic s={11} v={12}><path d="M1 11V6h2v5zM5 11V3h2v8zM9 11V1h2v10z" fill="#666" /></Ic></RailItem>
        </Rail>
        <Frame>
          <Report>
            <CanvasRow>
              <Canvas>
                <KpiRow>
                  <Card>
                    <CardTitle>Percentage of Events Impacting Services and Perc...</CardTitle>
                    <CardBody>
                      <Spark viewBox="0 0 169 68" preserveAspectRatio="none"><path d={sparkPath} fill="#e2f2e5" /></Spark>
                      <KpiValue>40.8%<Check2 /></KpiValue>
                      <KpiGoal>Goal: 90.0% (+54.68%)</KpiGoal>
                    </CardBody>
                  </Card>
                  <Card>
                    <CardTitle>Percentage of Events Critic...</CardTitle>
                    <CardBody>
                      <KpiValue>0.7%<Check2 /></KpiValue>
                      <KpiGoal>Goal: 5.0% (+86.83%)</KpiGoal>
                    </CardBody>
                  </Card>
                  <Card $shift={10}>
                    <CardTitle>&nbsp;</CardTitle>
                    <CardBody>
                      <BigNum>1M</BigNum>
                      <BigLabel>Events Total</BigLabel>
                    </CardBody>
                  </Card>
                  <Card>
                    <SlicerTitle>Component Host</SlicerTitle>
                    <SlicerRow>
                      <SlicerBox>Search<Search size={6} color="#999" /></SlicerBox>
                      <Clear><Eraser size={6} /></Clear>
                    </SlicerRow>
                  </Card>
                </KpiRow>
                <TreeTitle>Average Event Duration - Minutes by Component Type</TreeTitle>
                <TreeWrap>
                  <TreeRoot $d="row" $w={1}>
                    {treemap.k!.map((c, i) => <Tree key={i} n={c} />)}
                  </TreeRoot>
                  <VisualHeader>
                    <Filter size={7} />
                    <HeadBar />
                    <Maximize2 size={7} />
                    <HeadBar />
                    <HeadDots>···</HeadDots>
                  </VisualHeader>
                </TreeWrap>
                <TableVisual>
                  <Handle $x={0} $y={0} $w={3} $h={3} />
                  <Handle $x={272} $y={0} $w={8} />
                  <Handle $x={-1} $y={49} $h={7} />
                  <Handle $x={546} $y={49} $h={7} />
                  <Handle $x={272} $y={99} $w={8} />
                  <Handle $x={544} $y={98} $w={3} $h={3} />
                  <ColHead>Component Host</ColHead>
                  <Rows>
                    {hosts.map((h, i) => <TblRow key={h} $odd={i % 2 === 0}>{h}</TblRow>)}
                  </Rows>
                  <ScrollTrack><span>▴</span><span>▾</span></ScrollTrack>
                </TableVisual>
              </Canvas>
              <FilterPane>
                <ChevronLeft size={10} />
                <FilterIcon><Filter size={8} /></FilterIcon>
                <FilterLabel>Filters</FilterLabel>
              </FilterPane>
            </CanvasRow>
            <PageTabs>
              <PageNav><ChevronLeft size={6} /><ChevronRight size={6} /></PageNav>
              <PageTab>Page 1</PageTab>
              <AddTab>+</AddTab>
            </PageTabs>
          </Report>
          <Pane $w={108}>
            <PaneHead $right={3}>Visualizations<ChevronRight size={10} color="#777" /></PaneHead>
            <VizGrid>
              {viz.map((v, i) => <VizCell key={i} $sel={i === 25}>{v}</VizCell>)}
            </VizGrid>
            <VizTabs>
              <VizTab $on><Ic s={13} v={14}><rect x="1" y="2" width="12" height="10" fill="#fff" stroke="#666" strokeWidth=".8" /><path d="M1 5h12M1 8h12" stroke="#666" strokeWidth=".6" strokeDasharray="1 1" /></Ic></VizTab>
              <VizTab><Ic s={13} v={14}><rect x="2" y="1" width="9" height="3.5" rx=".5" fill="#fff" stroke="#666" /><path d="M11 3h2v3H7v2" stroke="#666" /><rect x="6" y="8" width="2" height="5" fill="#666" /></Ic></VizTab>
              <VizTab><Ic s={13} v={14}><circle cx="6" cy="6" r="4.5" fill="#fff" stroke="#666" /><path d="M9.5 9.5L13 13" stroke="#666" strokeWidth="1.3" /><path d="M3 7l2-2 2 1 2-2" stroke="#888" strokeWidth=".7" /></Ic></VizTab>
            </VizTabs>
            <Caption $top={4}>Values</Caption>
            <Well>
              <Pill>Component Host<PillIcons><ChevronDown size={7} /><X size={7} /></PillIcons></Pill>
            </Well>
            <Section>Drillthrough</Section>
            <Caption $top={7}>Cross-report</Caption>
            <ToggleRow $top={7}>Off<Toggle /></ToggleRow>
            <Caption $top={11}>Keep all filters</Caption>
            <ToggleRow $top={9}>On<Toggle on /></ToggleRow>
            <Drop>Add drillthrough fields here</Drop>
          </Pane>
          <Pane $w={105}>
            <PaneHead $right={2}>Fields<ChevronRight size={10} color="#777" /></PaneHead>
            <FieldSearch><Search size={8} color="#666" style={{ transform: 'scaleX(-1)' }} />alias<TextCaret /></FieldSearch>
            <TreeLine $pad={3} $top={10} $bold>
              <ChevronUp size={7} color="#888" />
              <Ic s={11} v={12}><rect x="1" y="1" width="9" height="8" fill="#fff" stroke="#444" /><rect x="1" y="1" width="9" height="3" fill="#444" /><path d="M4 4v5M7 4v5" stroke="#444" strokeWidth=".6" /><circle cx="9" cy="9" r="2.6" fill="#e8b90f" /></Ic>
              Event Dimensions
            </TreeLine>
            <TreeLine $pad={8} $top={7}>
              <ChevronUp size={7} color="#888" />
              <Ic s={10} v={12}><path d="M1 3h4l1 1h5v7H1z" fill="#333" /></Ic>
              Additional Information
            </TreeLine>
            <AliasRow>
              <Check /><Alias>Alias</Alias><RowDots>···</RowDots>
              <Cursor viewBox="0 0 13 16"><path d="M3.5 1.5c1-.6 2 0 2 1v4l4 1c1.4.4 1.8 1 1.8 2v3.5l-1 2H5l-3-4.2c-.6-1 .3-2 1.5-1.2V2.5z" fill="#fff" stroke="#333" strokeWidth=".9" /></Cursor>
            </AliasRow>
          </Pane>
        </Frame>
      </Body>
      <Status><span>PAGE 1 OF 1</span><span>Live connection: Connected</span></Status>
      <Taskbar>
        <StartBtn><Ic s={11} v={12}><path d="M0 2l5-.7V6H0zM6 1.2L12 .3V6H6zM0 7h5v4.6L0 11zM6 7h6v5l-6-.9z" fill="#fff" /></Ic></StartBtn>
        <SearchBar><Search size={11} color="#333" style={{ transform: 'scaleX(-1)' }} />Type here to search</SearchBar>
        <TaskIcon $w={30}><Ic s={12}><circle cx="12" cy="12" r="9" stroke="#fff" strokeWidth="3" /></Ic></TaskIcon>
        <TaskIcon $w={29}><Ic s={12}><rect x="3" y="5" width="13" height="14" stroke="#ddd" strokeWidth="2" /><path d="M20 5v14" stroke="#ddd" strokeWidth="2" /></Ic></TaskIcon>
        <TaskIcon $w={25}><Ic s={14}><path d="M3 13C3 6 8 3 13 3c6 0 9 4 9 10H8c0 5 7 7 12 4v4c-7 3-17 1-17-8zm5-3h8c0-4-7-4-8 0z" fill="#1a7fd0" /></Ic></TaskIcon>
        <TaskIcon $w={25}><Ic s={15}><path d="M2 9l10-6 10 6v11H2z" fill="#f4f4f4" /><path d="M2 9l10 7 10-7" stroke="#222" strokeWidth="1.4" /></Ic></TaskIcon>
        <TaskIcon $w={25}><Ic s={15}><path d="M2 5h8l2 2h10v14H2z" fill="#f0c14a" /><rect x="5" y="13" width="14" height="6" fill="#4a90c8" /></Ic></TaskIcon>
        <TaskIcon $w={25} $on><Ic s={15}><circle cx="12" cy="12" r="10.5" fill="#1ed760" /><path d="M6 9c4-1 9-1 13 1M7 12.5c3-.8 7-.6 10 1M8 16c2.5-.6 5-.4 7 .8" stroke="#222" strokeWidth="1.6" /></Ic></TaskIcon>
        <TaskIcon $w={25}><Ic s={15}><rect x="2" y="3" width="19" height="16" fill="#ddd" stroke="#999" /><rect x="4" y="5" width="15" height="10" fill="#333" /><path d="M12 14l5-4 5 5-5 6z" fill="#e0503a" /><path d="M15 18l3-3 3 3-3 3z" fill="#efc53a" /></Ic></TaskIcon>
        <TaskIcon $w={25}><Ic s={15}><rect x="7" y="3" width="16" height="18" fill="#2b6cc0" /><rect x="1" y="6" width="12" height="12" fill="#1a4f9a" /><path d="M3 9l1.5 6L6.5 10l2 5L10 9" stroke="#fff" strokeWidth="1.1" /></Ic></TaskIcon>
        <TaskIcon $w={25} $on><Ic s={15}><circle cx="12" cy="12" r="11" fill="#e04a3a" /><path d="M12 12L2.5 17.5A11 11 0 0012 23z" fill="#2fa84f" /><path d="M12 12l9.5 5.5A11 11 0 0023 12c0-2-.5-3.5-1.5-5.5H12z" fill="#f4c20d" /><circle cx="12" cy="12" r="5" fill="#fff" /><circle cx="12" cy="12" r="3.8" fill="#3b78e7" /></Ic></TaskIcon>
        <TaskIcon $w={25}><Ic s={15}><circle cx="12" cy="12" r="10.5" fill="#c8d8e0" /><path d="M5 6c4-2 8 0 9 4s-3 6-7 5z" fill="#4a7ab0" /><path d="M14 14c3-1 6 0 7 2-2 3-5 5-8 5z" fill="#2a4f80" /></Ic></TaskIcon>
        <TaskIcon $w={25} $on $hi><Ic s={16}><rect x="1" y="2" width="22" height="20" rx="1" fill="#f0c41a" /><path d="M6 17v-4h2v4zM10 17v-7h2v7zM14 17V8h2v9z" fill="#333" /></Ic></TaskIcon>
        <TaskIcon $w={25}><Ic s={16}><rect x="3" y="1" width="18" height="22" fill="#f0c41a" /><path d="M9 16v-3h2v3zM12 16V9h2v7z" fill="#333" /></Ic></TaskIcon>
        <TaskIcon $w={25}><Ic s={14}><path d="M3 12l7-4h9l2 9-7-3-3 3z" fill="#666" /><circle cx="15" cy="12" r="2" fill="#ccc" /></Ic></TaskIcon>
        <TaskIcon $w={25}><Ic s={15}><rect x="4" y="1" width="17" height="22" fill="#2c3f4f" /><path d="M8 8l7-3-2 5 4 1-8 8 2-7-4-1z" fill="#4ad0c0" /></Ic></TaskIcon>
        <TaskIcon $w={25}><Ic s={15}><circle cx="12" cy="11" r="9" fill="#86a860" /><circle cx="12" cy="9" r="4" fill="#3a5a28" /><path d="M6 21l2-5h8l2 5z" fill="#c8a060" /></Ic></TaskIcon>
        <TaskIcon $w={24} $on><Ic s={15}><rect x="1" y="3" width="20" height="17" fill="#c8d4e4" /><rect x="3" y="6" width="7" height="10" fill="#3a78b0" /><circle cx="18" cy="18" r="4.5" fill="#e0304a" /><circle cx="18" cy="18" r="2" fill="#fff" /></Ic></TaskIcon>
        <Tray>
          <TrayItem $w={20}><ChevronUp size={11} color="#ddd" /></TrayItem>
          <TrayItem $w={17}><TrayIcon><path d="M4 20C7 11 13 6 20 4v16z" fill="#888" /></TrayIcon></TrayItem>
          <TrayItem $w={20}><TrayIcon><path d="M3 9h4l5-4v14l-5-4H3z" stroke="#ccc" strokeWidth="1.4" /><path d="M15 9c1 2 1 4 0 6M18 7c2 3 2 7 0 10" stroke="#aaa" strokeWidth="1.2" /></TrayIcon></TrayItem>
          <TrayItem $w={25}><TrayIcon><path d="M4 20l3-7 8-8 4 4-8 8z" stroke="#ccc" strokeWidth="1.6" /></TrayIcon></TrayItem>
          <TrayItem $w={21}><span>ENG</span><span>US</span></TrayItem>
          <TrayItem $w={37}><span>11:41 AM</span><span>10/23/2019</span></TrayItem>
          <TrayItem $w={24}><Ic s={12}><path d="M3 3h18v15h-6l-3 3-1-3H3z" stroke="#ddd" strokeWidth="1.6" /></Ic></TrayItem>
        </Tray>
      </Taskbar>
    </Page>
  );
}
